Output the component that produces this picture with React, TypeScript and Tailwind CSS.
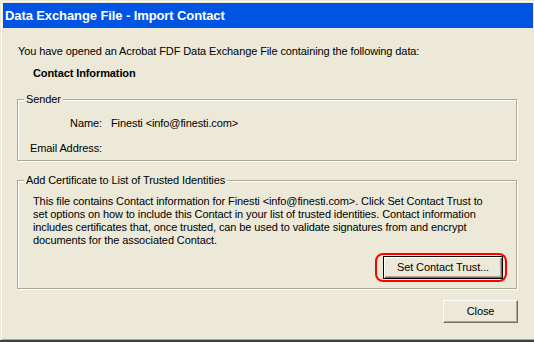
const FONT = "font-['Liberation_Sans',Arial,sans-serif]";

function GroupBox({ title, className, children }: { title: string; className?: string; children: React.ReactNode }) {
  return (
    <fieldset
      className={`m-0 p-0 min-w-0 w-[500px] border border-[#aca899] shadow-[inset_1px_1px_0_#fff,1px_1px_0_#fff] ${className ?? ""}`}
    >
      <legend className="ml-[6px] px-[2px] leading-[13px] bg-[#ece9d8]">{title}</legend>
      {children}
    </fieldset>
  );
}

export default function App() {
  return (
    <div className={`w-[534px] h-[342px] bg-[#ece9d8] pt-px pl-px border-b-2 border-[#404040] flex flex-col text-[11px] leading-[13px] tracking-[-0.1px] text-black ${FONT}`}>
      <div className="flex-1 flex flex-col border-t border-l border-b border-t-white border-l-white border-b-[#aca899] pt-px pl-px pr-px">
        {/* Title bar */}
        <div className="h-[25px] bg-[#0054e3] pl-[2px] flex items-center">
          <span className="text-white font-bold text-[13px] leading-[25px] tracking-[-0.1px]">Data Exchange File - Import Contact</span>
        </div>

        {/* Body */}
        <div className="flex flex-col pl-[14px]">
          <p className="mt-[17px] pl-px">You have opened an Acrobat FDF Data Exchange File containing the following data:</p>
          <p className="mt-[9px] pl-[16px] font-bold">Contact Information</p>

          <GroupBox title="Sender" className="mt-[13px] pb-[5px]">
            <div className="mt-[11px] grid grid-cols-[84px_1fr] gap-x-[9px] gap-y-[12px]">
              <span className="text-right">Name:</span>
              <span>Finesti &lt;info@finesti.com&gt;</span>
              <span className="text-right">Email Address:</span>
              <span></span>
            </div>
          </GroupBox>

          <GroupBox title="Add Certificate to List of Trusted Identities" className="mt-[13px] pb-[6px]">
            <p className="mt-[8px] pl-[15px]">
              This file contains Contact information for Finesti &lt;info@finesti.com&gt;. Click Set Contact Trust to
              <br />
              set options on how to include this Contact in your list of trusted identities. Contact information
              <br />
              includes certificates that, once trusted, can be used to validate signatures from and encrypt
              <br />
              documents for the associated Contact.
            </p>
            <div className="mt-[6px] flex justify-end pr-[9px]">
              <div className="border-2 border-[#ff0000] rounded-[8px] pl-[6px] pr-[2px] pt-px pb-px">
                <button className="w-[120px] h-[23px] bg-[#ece9d8] border border-black shadow-[inset_1px_1px_0_#fff,inset_-1px_-1px_0_#716f64,inset_-2px_-2px_0_#aca899] flex items-center justify-center">
                  Set Contact Trust...
                </button>
              </div>
            </div>
          </GroupBox>

          <div className="mt-[11px] flex w-[501px] justify-end">
            <button className="w-[75px] h-[23px] bg-[#ece9d8] border border-t-white border-l-white border-r-[#716f64] border-b-[#716f64] shadow-[inset_-1px_-1px_0_#aca899] flex items-center justify-center">
              Close
            </button>
          </div>
        </div>
      </div>
    </div>
  );
}
